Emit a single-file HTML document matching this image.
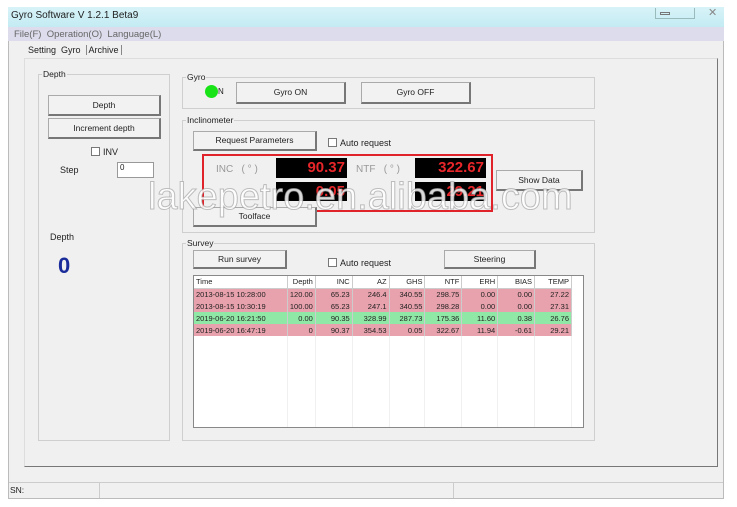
<html><head><style>
*{box-sizing:border-box}
body{margin:0;width:737px;height:507px;background:#fff;font-family:"Liberation Sans",sans-serif;font-size:9px;color:#222;position:relative;overflow:hidden}
.a{position:absolute}
.btn{position:absolute;background:#f2f2f2;border:1px solid #aaa;border-right:2px solid #777;border-bottom:2px solid #777;text-align:center;font-size:8.5px}
.grp{position:absolute;border:1px solid #cfcfcf}
.lg{position:absolute;top:-6px;left:3px;background:#f0f0f0;font-size:8.5px;padding:0 1px}
.cb{position:absolute;width:9px;height:9px;border:1px solid #777;background:#fff}
.blk{position:absolute;background:#000;color:#e8262a;font-size:15px;font-weight:bold;text-align:right;padding-right:2px;line-height:19px}
table{border-collapse:collapse;font-size:7.5px}
td{border-right:1px solid #ccc;padding:0 2px;height:12px;text-align:right;line-height:11px}
.e td{height:101px;border-right:1px solid #f0f0f0}
</style></head><body>
<div class="a" style="left:8px;top:7px;width:716px;height:492px;background:#f0f0f0;border:1px solid #bbb"></div>
<div class="a" style="left:8px;top:7px;width:716px;height:20px;background:linear-gradient(#d8f3f8,#c4ebf3)"></div>
<div class="a" style="left:11px;top:10px;font-size:10px">Gyro Software V 1.2.1 Beta9</div>
<div class="a" style="left:655px;top:8px;width:40px;height:11px;border:1px solid #9bb;border-top:none"></div>
<div class="a" style="left:660px;top:12px;width:10px;height:3px;border:1px solid #777"></div>
<div class="a" style="left:708px;top:6px;font-size:11px;color:#888">✕</div>
<div class="a" style="left:8px;top:27px;width:716px;height:14px;background:#dcdcec"></div>
<div class="a" style="left:14px;top:29px;font-size:9.5px;color:#666">File(F) &nbsp;Operation(O) &nbsp;Language(L)</div>
<div class="a" style="left:28px;top:45px;font-size:9px">Setting &nbsp;Gyro &nbsp;<span style="border-left:1px solid #888;border-right:1px solid #888;padding:0 2px">Archive</span></div>
<div class="a" style="left:24px;top:58px;width:694px;height:409px;border:1px solid #ddd;border-right:1px solid #777;border-bottom:1px solid #777"></div>
<div class="grp" style="left:38px;top:74px;width:132px;height:367px"><span class="lg">Depth</span></div>
<div class="btn" style="left:48px;top:95px;width:113px;height:21px;line-height:18px">Depth</div>
<div class="btn" style="left:48px;top:118px;width:113px;height:21px;line-height:18px">Increment depth</div>
<div class="cb" style="left:91px;top:147px"></div><div class="a" style="left:103px;top:147px">INV</div>
<div class="a" style="left:60px;top:165px">Step</div>
<div class="a" style="left:117px;top:162px;width:37px;height:16px;background:#fff;border:1px solid #999;padding-left:2px;font-size:8px">0</div>
<div class="a" style="left:50px;top:232px">Depth</div>
<div class="a" style="left:58px;top:253px;font-size:22px;font-weight:bold;color:#1a2b9a">0</div>
<div class="grp" style="left:182px;top:77px;width:413px;height:32px"><span class="lg">Gyro</span></div>
<div class="a" style="left:205px;top:85px;width:13px;height:13px;border-radius:50%;background:#17e317"></div>
<div class="a" style="left:218px;top:87px;font-size:8px">N</div>
<div class="btn" style="left:236px;top:82px;width:110px;height:22px;line-height:19px">Gyro ON</div>
<div class="btn" style="left:361px;top:82px;width:110px;height:22px;line-height:19px">Gyro OFF</div>
<div class="grp" style="left:182px;top:120px;width:413px;height:113px"><span class="lg">Inclinometer</span></div>
<div class="btn" style="left:193px;top:131px;width:124px;height:20px;line-height:17px">Request Parameters</div>
<div class="cb" style="left:328px;top:138px"></div><div class="a" style="left:340px;top:138px">Auto request</div>
<div class="a" style="left:216px;top:164px;color:#999;font-size:10px">INC &nbsp; ( ° )</div>
<div class="a" style="left:356px;top:164px;color:#999;font-size:10px">NTF &nbsp; ( ° )</div>
<div class="blk" style="left:276px;top:158px;width:71px;height:20px">90.37</div>
<div class="blk" style="left:415px;top:158px;width:71px;height:20px">322.67</div>
<div class="blk" style="left:276px;top:182px;width:71px;height:19px">0.05</div>
<div class="blk" style="left:415px;top:182px;width:71px;height:19px">29.21</div>
<div class="a" style="left:202px;top:154px;width:291px;height:58px;border:2px solid #e0222a"></div>
<div class="btn" style="left:496px;top:170px;width:87px;height:21px;line-height:18px">Show Data</div>
<div class="btn" style="left:193px;top:207px;width:124px;height:20px;line-height:17px">Toolface</div>
<div class="grp" style="left:182px;top:243px;width:413px;height:198px"><span class="lg">Survey</span></div>
<div class="btn" style="left:193px;top:250px;width:94px;height:19px;line-height:16px">Run survey</div>
<div class="cb" style="left:328px;top:258px"></div><div class="a" style="left:340px;top:258px">Auto request</div>
<div class="btn" style="left:444px;top:250px;width:92px;height:19px;line-height:16px">Steering</div>
<div class="a" style="left:193px;top:275px;width:391px;height:153px;background:#fff;border:1px solid #888;overflow:hidden">
<table style="width:378px">
<tr style="background:#fff;border-bottom:1px solid #ccc"><td style="text-align:left;width:94px">Time</td><td style="width:27px">Depth</td><td style="width:37px">INC</td><td style="width:37px">AZ</td><td style="width:36px">GHS</td><td style="width:37px">NTF</td><td style="width:36px">ERH</td><td style="width:37px">BIAS</td><td style="width:37px">TEMP</td></tr>
<tr style="background:#e8a2ad"><td style="text-align:left">2013-08-15 10:28:00</td><td>120.00</td><td>65.23</td><td>246.4</td><td>340.55</td><td>298.75</td><td>0.00</td><td>0.00</td><td>27.22</td></tr>
<tr style="background:#e8a2ad"><td style="text-align:left">2013-08-15 10:30:19</td><td>100.00</td><td>65.23</td><td>247.1</td><td>340.55</td><td>298.28</td><td>0.00</td><td>0.00</td><td>27.31</td></tr>
<tr style="background:#8fe8a5"><td style="text-align:left">2019-06-20 16:21:50</td><td>0.00</td><td>90.35</td><td>328.99</td><td>287.73</td><td>175.36</td><td>11.60</td><td>0.38</td><td>26.76</td></tr>
<tr style="background:#e8a2ad"><td style="text-align:left">2019-06-20 16:47:19</td><td>0</td><td>90.37</td><td>354.53</td><td>0.05</td><td>322.67</td><td>11.94</td><td>-0.61</td><td>29.21</td></tr>
<tr class="e"><td></td><td></td><td></td><td></td><td></td><td></td><td></td><td></td><td></td></tr>
</table></div>
<div class="a" style="left:148px;top:176px;font-size:38px;color:rgba(255,255,255,0.85);-webkit-text-stroke:1px rgba(150,150,150,0.6)">lakepetro.en.alibaba.com</div>
<div class="a" style="left:9px;top:482px;width:714px;height:16px;border-top:1px solid #ccc"></div>
<div class="a" style="left:99px;top:482px;width:1px;height:16px;background:#ccc"></div>
<div class="a" style="left:453px;top:482px;width:1px;height:16px;background:#ccc"></div>
<div class="a" style="left:10px;top:485px;font-size:8.5px">SN:</div>
</body></html>
